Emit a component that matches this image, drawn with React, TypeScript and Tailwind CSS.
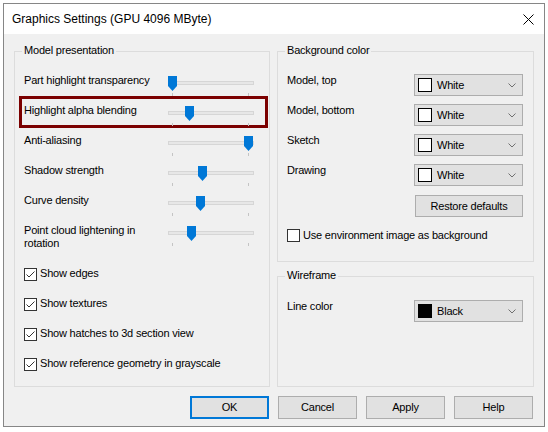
import React from 'react';

const font = { fontFamily: '"Liberation Sans", Arial, sans-serif' };

type SliderRow = { label: string[]; pos: number; highlight?: boolean };

const sliders: SliderRow[] = [
  { label: ['Part highlight transparency'], pos: 0 },
  { label: ['Highlight alpha blending'], pos: 17, highlight: true },
  { label: ['Anti-aliasing'], pos: 76 },
  { label: ['Shadow strength'], pos: 30 },
  { label: ['Curve density'], pos: 28 },
  { label: ['Point cloud lightening in', 'rotation'], pos: 19 },
];

const checks = [
  'Show edges',
  'Show textures',
  'Show hatches to 3d section view',
  'Show reference geometry in grayscale',
];

function Slider({ pos }: { pos: number }) {
  return (
    <div className="relative w-[86px] h-[20px] mt-[10px] shrink-0">
      {/* track */}
      <div className="absolute left-0 right-0 top-[5px] h-[4px] bg-[#e7e7e7] border border-[#d6d6d6]" />
      {/* ticks */}
      <div className="absolute left-[4px] top-[17px] w-px h-[3px] bg-[#c4c4c4]" />
      <div className="absolute left-[80px] top-[17px] w-px h-[3px] bg-[#c4c4c4]" />
      {/* thumb */}
      <svg className="absolute top-0" style={{ left: pos }} width="9" height="15" viewBox="0 0 9 15">
        <polygon points="0,0 9,0 9,10 4.5,15 0,10" fill="#0078d7" />
      </svg>
    </div>
  );
}

function CheckBox({ checked }: { checked: boolean }) {
  return (
    <div className="w-[13px] h-[13px] border border-[#333] bg-white shrink-0 flex items-center justify-center">
      {checked && (
        <svg width="11" height="11" viewBox="0 0 11 11">
          <polyline points="1.5,5.5 4,8 9.5,2.5" fill="none" stroke="#333" strokeWidth="1" />
        </svg>
      )}
    </div>
  );
}

function Dropdown({ value, swatch }: { value: string; swatch: string }) {
  return (
    <div className="w-[109px] h-[22px] border border-[#adadad] bg-[#e1e1e1] flex items-center pl-[3px] pr-[6px] shrink-0">
      <div className="w-[14px] h-[14px] border border-black" style={{ background: swatch }} />
      <span className="ml-[5px] flex-1">{value}</span>
      <svg width="8" height="5" viewBox="0 0 8 5">
        <polyline points="0.5,0.5 4,4 7.5,0.5" fill="none" stroke="#707070" strokeWidth="1" />
      </svg>
    </div>
  );
}

function GroupBox({ title, className, children }: { title: string; className: string; children: React.ReactNode }) {
  return (
    <div className={`relative border border-[#dcdcdc] ${className}`}>
      <span className="absolute -top-[8px] left-[7px] px-[2px] bg-[#f0f0f0] leading-[13px]">{title}</span>
      {children}
    </div>
  );
}

function Button({ label, primary }: { label: string; primary?: boolean }) {
  return (
    <div
      className={`w-[79px] h-[23px] flex items-center justify-center bg-[#e1e1e1] ${
        primary ? 'border-2 border-[#0078d7]' : 'border border-[#adadad]'
      }`}
    >
      {label}
    </div>
  );
}

export default function App() {
  return (
    <div className="w-[548px] h-[432px] bg-white pt-[3px] pl-[3px] text-[11px] text-black" style={font}>
      <div className="w-[542px] h-[424px] border border-[#868686] flex flex-col">
        {/* Title bar */}
        <div className="h-[30px] bg-white flex items-center pl-[8px] pr-[10px] shrink-0">
          <span className="flex-1 text-[12px]">Graphics Settings (GPU 4096 MByte)</span>
          <svg width="11" height="11" viewBox="0 0 11 11">
            <path d="M0.5 0.5 L10.5 10.5 M10.5 0.5 L0.5 10.5" stroke="#000" strokeWidth="1" />
          </svg>
        </div>

        {/* Body */}
        <div className="flex-1 bg-[#f0f0f0] flex flex-col pt-[17px] pl-[10px] pr-[9px] tracking-[-0.2px]">
          <div className="flex gap-[7px]">
            {/* Model presentation */}
            <GroupBox title="Model presentation" className="w-[256px] h-[336px] pt-[14px] pl-[9px]">
              {sliders.map((s) => (
                <div key={s.label[0]} className={`relative flex items-start ${s.label.length > 1 ? 'h-[43px]' : 'h-[30px]'}`}>
                  {s.highlight && (
                    <div className="absolute -left-[5px] right-[1px] top-0 h-[32px] border-[3px] border-[#7b0000]" />
                  )}
                  <div className="w-[144px] pt-[8px] leading-[13px]">
                    {s.label.map((l) => (
                      <div key={l}>{l}</div>
                    ))}
                  </div>
                  <Slider pos={s.pos} />
                </div>
              ))}
              {checks.map((c) => (
                <div key={c} className="h-[30px] flex items-center gap-[3px]">
                  <CheckBox checked />
                  <span className="leading-[13px] -mt-[2px]">{c}</span>
                </div>
              ))}
            </GroupBox>

            {/* Right column */}
            <div className="flex flex-col gap-[14px]">
              <GroupBox title="Background color" className="w-[257px] h-[211px] pt-[14px] pl-[9px] pr-[10px]">
                {['Model, top', 'Model, bottom', 'Sketch', 'Drawing'].map((l) => (
                  <div key={l} className="h-[30px] flex items-start justify-between">
                    <span className="pt-[8px] leading-[13px]">{l}</span>
                    <div className="mt-[8px]">
                      <Dropdown value="White" swatch="#ffffff" />
                    </div>
                  </div>
                ))}
                <div className="flex justify-end mt-[9px]">
                  <div className="w-[108px] h-[22px] border border-[#adadad] bg-[#e1e1e1] flex items-center justify-center">
                    Restore defaults
                  </div>
                </div>
                <div className="flex items-center gap-[3px] mt-[12px]">
                  <CheckBox checked={false} />
                  <span className="leading-[13px] -mt-[1px]">Use environment image as background</span>
                </div>
              </GroupBox>

              <GroupBox title="Wireframe" className="w-[257px] h-[111px] pt-[15px] pl-[9px] pr-[10px]">
                <div className="h-[30px] flex items-start justify-between">
                  <span className="pt-[8px] leading-[13px]">Line color</span>
                  <div className="mt-[8px]">
                    <Dropdown value="Black" swatch="#000000" />
                  </div>
                </div>
              </GroupBox>
            </div>
          </div>

          {/* Buttons */}
          <div className="flex justify-end gap-[9px] mt-[9px] pr-[2px]">
            <Button label="OK" primary />
            <Button label="Cancel" />
            <Button label="Apply" />
            <Button label="Help" />
          </div>
        </div>
      </div>
    </div>
  );
}
